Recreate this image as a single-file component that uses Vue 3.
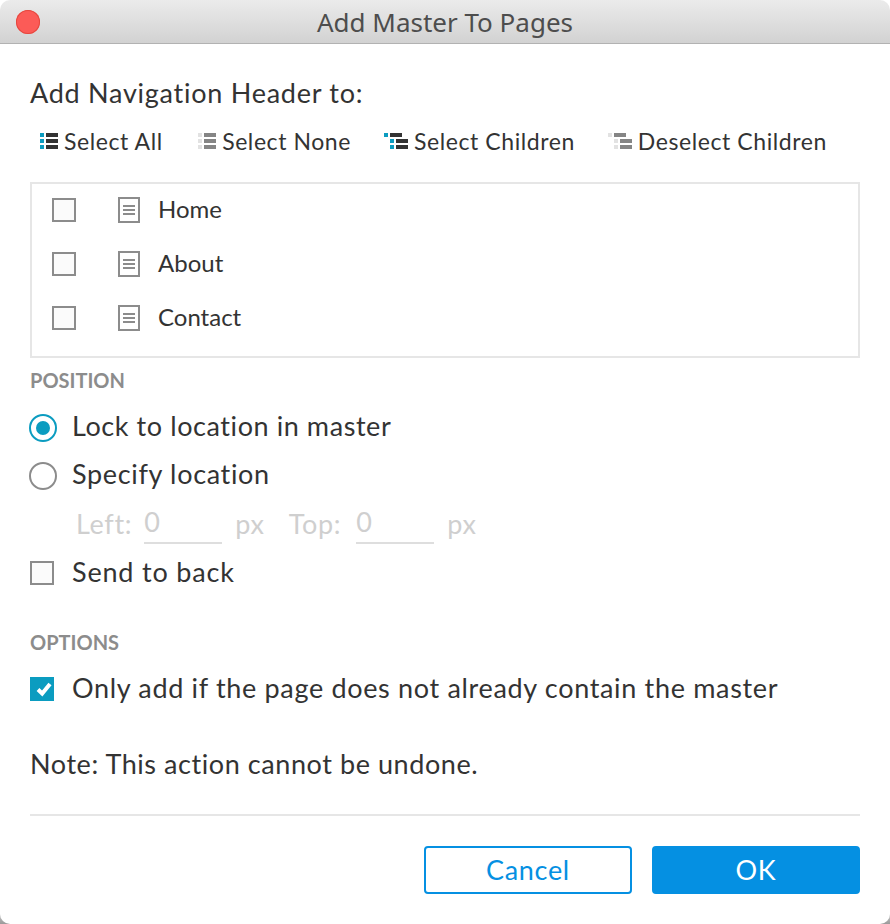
<script setup>
const pages = ['Home', 'About', 'Contact']
</script>

<template>
  <div class="desk">
    <div class="window">
      <header class="titlebar">
        <span class="close"></span>
        <span class="title">Add Master To Pages</span>
      </header>
      <main class="content">
        <h1 class="heading">Add Navigation Header to:</h1>
        <div class="toolbar">
          <div class="tool">
            <svg width="18" height="16" viewBox="0 0 18 16"><g fill="#0b9cc0"><rect width="4" height="4"/><rect y="6" width="4" height="4"/><rect y="12" width="4" height="4"/></g><g fill="#333"><rect x="6" width="12" height="4"/><rect x="6" y="6" width="12" height="4"/><rect x="6" y="12" width="12" height="4"/></g></svg>
            <span>Select All</span>
          </div>
          <div class="tool">
            <svg width="18" height="16" viewBox="0 0 18 16"><g fill="#e2e2e2"><rect width="4" height="4"/><rect y="6" width="4" height="4"/><rect y="12" width="4" height="4"/></g><g fill="#858585"><rect x="6" width="12" height="4"/><rect x="6" y="6" width="12" height="4"/><rect x="6" y="12" width="12" height="4"/></g></svg>
            <span>Select None</span>
          </div>
          <div class="tool">
            <svg width="24" height="16" viewBox="0 0 24 16"><g fill="#0b9cc0"><rect width="4" height="4"/><rect x="6" y="6" width="4" height="4"/><rect x="6" y="12" width="4" height="4"/></g><g fill="#333"><rect x="6" width="12" height="4"/><rect x="12" y="6" width="12" height="4"/><rect x="12" y="12" width="12" height="4"/></g></svg>
            <span>Select Children</span>
          </div>
          <div class="tool">
            <svg width="24" height="16" viewBox="0 0 24 16"><g fill="#e2e2e2"><rect width="4" height="4"/><rect x="6" y="6" width="4" height="4"/><rect x="6" y="12" width="4" height="4"/></g><g fill="#858585"><rect x="6" width="12" height="4"/><rect x="12" y="6" width="12" height="4"/><rect x="12" y="12" width="12" height="4"/></g></svg>
            <span>Deselect Children</span>
          </div>
        </div>

        <div class="pagelist">
          <div v-for="p in pages" :key="p" class="pagerow">
            <span class="check"></span>
            <svg class="pageicon" width="22" height="26" viewBox="0 0 22 26"><rect x="1" y="1" width="20" height="24" fill="#fff" stroke="#8c8c8c" stroke-width="2"/><g fill="#8c8c8c"><rect x="5" y="8" width="12" height="2"/><rect x="5" y="12" width="12" height="2"/><rect x="5" y="16" width="12" height="2"/></g></svg>
            <span class="pagename">{{ p }}</span>
          </div>
        </div>

        <div class="section position">POSITION</div>
        <div class="option first">
          <span class="radio on"></span>
          <span class="label lock">Lock to location in master</span>
        </div>
        <div class="option second">
          <span class="radio"></span>
          <span class="label">Specify location</span>
        </div>
        <div class="coords">
          <span>Left:</span><span class="field">0</span><span class="unit">px</span>
          <span class="toplabel">Top:</span><span class="field">0</span><span class="unit">px</span>
        </div>
        <div class="option send">
          <span class="check small"></span>
          <span class="label wide">Send to back</span>
        </div>

        <div class="section options">OPTIONS</div>
        <div class="option only">
          <span class="check small checked">
            <svg width="24" height="24" viewBox="0 0 24 24"><path d="M8 12.5 12.2 16.5 20 7" fill="none" stroke="#fff" stroke-width="4"/></svg>
          </span>
          <span class="label">Only add if the page does not already contain the master</span>
        </div>

        <p class="note">Note: This action cannot be undone.</p>
        <div class="divider"></div>
        <div class="actions">
          <button class="btn ghost">Cancel</button>
          <button class="btn solid">OK</button>
        </div>
      </main>
    </div>
  </div>
</template>

<style>
html, body { margin: 0; background: #fff; }
</style>

<style scoped>
.desk {
  width: 890px;
  height: 924px;
  background: linear-gradient(#fff 900px, #9a9a9a 924px);
}
.window {
  width: 890px;
  height: 924px;
  background: #fff;
  border-radius: 10px;
  overflow: hidden;
  box-sizing: border-box;
  font-family: Lato, "Open Sans", sans-serif;
  color: #333;
}
.titlebar {
  height: 44px;
  box-sizing: border-box;
  border-bottom: 1px solid #b2b2b2;
  background: linear-gradient(#ebebeb, #d2d2d2);
  display: flex;
  align-items: center;
  justify-content: center;
  position: relative;
}
.close {
  position: absolute;
  left: 16px;
  top: 10px;
  width: 24px;
  height: 24px;
  border-radius: 50%;
  background: #fc5b57;
  box-shadow: inset 0 0 0 1px #e5483f;
}
.title {
  font-family: "Noto Sans", sans-serif;
  font-size: 26px;
  color: #4d4d4d;
}
.content {
  padding: 0 30px;
  font-size: 27px;
  letter-spacing: 0.67px;
}
.heading {
  margin: 32px 0 0;
  font-size: 27px;
  font-weight: 400;
  line-height: 34px;
  letter-spacing: 0.74px;
}
.toolbar {
  display: flex;
  gap: 33px;
  margin: 14px 0 0 10px;
  height: 34px;
  font-size: 23px;
  letter-spacing: 0.58px;
}
.tool {
  display: flex;
  align-items: center;
  gap: 6px;
}
.tool:first-child { margin-right: 2.5px; }
.pagelist {
  margin-top: 24px;
  height: 176px;
  box-sizing: border-box;
  border: 2px solid #e6e6e6;
  display: flex;
  flex-direction: column;
  gap: 2px;
  font-size: 24px;
  letter-spacing: 0;
}
.pagerow {
  height: 52px;
  display: flex;
  align-items: center;
  padding-left: 20px;
}
.pagename { padding-bottom: 4px; }
.check {
  width: 24px;
  height: 24px;
  box-sizing: border-box;
  border: 2px solid #8c8c8c;
  background: #fbfbfb;
  flex: none;
  display: block;
}
.pageicon {
  margin-left: 42px;
  margin-right: 18px;
  flex: none;
}
.section {
  font-size: 20px;
  font-weight: 700;
  letter-spacing: 0;
  color: #8c8c8c;
  line-height: 20px;
  height: 24px;
}
.position { margin-top: 12px; }
.options { margin-top: 41px; }
.option {
  display: flex;
  align-items: center;
  gap: 16px;
  height: 36px;
}
.label { padding-bottom: 4px; }
.radio + .label { padding-bottom: 6px; }
.lock { letter-spacing: 0.58px; }
.wide { letter-spacing: 0.82px; }
.first { margin-top: 16px; }
.second { margin-top: 12px; }
.send { margin-top: 12px; }
.only { margin-top: 15px; }
.radio {
  width: 28px;
  height: 28px;
  box-sizing: border-box;
  border-radius: 50%;
  border: 2px solid #8c8c8c;
  background: #fff;
  position: relative;
  flex: none;
  margin: 0 -1px 0 -1px;
}
.radio.on { border-color: #0b9cc0; }
.radio.on::after {
  content: "";
  position: absolute;
  inset: 5px;
  border-radius: 50%;
  background: #0b9cc0;
}
.small { margin-right: 2px; }
.checked {
  background: #0b9cc0;
  border: none;
}
.checked svg { display: block; }
.coords {
  display: flex;
  align-items: center;
  height: 36px;
  box-sizing: border-box;
  padding: 0 0 4px 46px;
  margin-top: 13px;
  color: #cfcfcf;
}
.field {
  width: 78px;
  box-sizing: border-box;
  margin-left: 12px;
  height: 37px;
  align-self: flex-start;
  line-height: 30px;
  border-bottom: 2px solid #dedede;
}
.unit { margin-left: 13px; }
.toplabel { margin: 0 3px 0 24px; }
.note {
  margin: 41px 0 0;
  line-height: 32px;
  padding-bottom: 4px;
  letter-spacing: 0.57px;
}
.divider {
  height: 2px;
  background: #e6e6e6;
  margin-top: 30px;
}
.actions {
  display: flex;
  justify-content: flex-end;
  gap: 20px;
  margin-top: 30px;
}
.btn {
  width: 208px;
  height: 48px;
  box-sizing: border-box;
  border-radius: 4px;
  font: inherit;
  letter-spacing: inherit;
  border: 2px solid #0590e2;
  padding: 0 0 2px;
}
.ghost { background: #fff; color: #0590e2; }
.solid { background: #0590e2; color: #fff; }
</style>
